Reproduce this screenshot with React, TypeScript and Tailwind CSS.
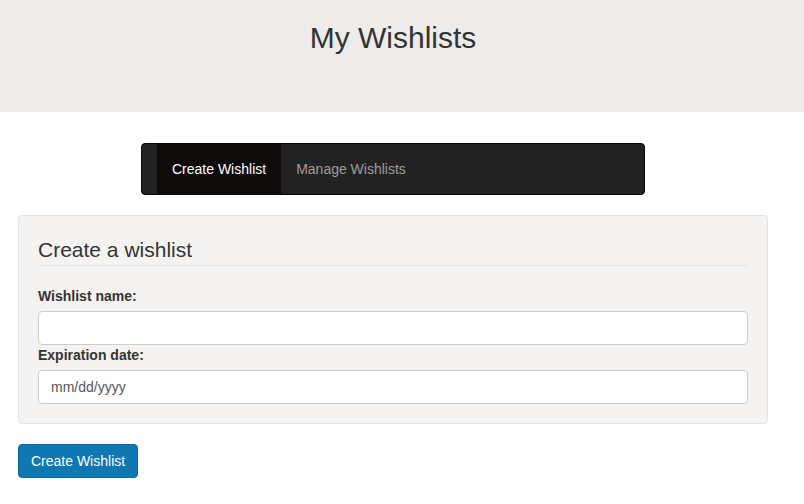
import React from 'react';

const App = () => {
  return (
    <div className="min-h-[504px] bg-white text-[14px] leading-[20px] text-[#333] font-['Liberation_Sans',Arial,sans-serif]">
      <header className="h-[112px] bg-[#eeeceb] mb-[31px]">
        <div className="w-[786px] pt-[20px] text-center">
          <h1 className="text-[30px] leading-[36px] font-normal text-[#333]">My Wishlists</h1>
        </div>
      </header>

      <div className="w-[786px] px-[18px]">
        <nav className="mx-auto w-[504px] h-[52px] flex bg-[#222] border border-[#080808] rounded-[4px] pl-[15px]">
          <a className="flex items-center px-[15px] bg-[#0e0a0a] text-white cursor-pointer">Create Wishlist</a>
          <a className="flex items-center px-[15px] text-[#9d9d9d] cursor-pointer">Manage Wishlists</a>
        </nav>

        <div className="mt-[20px] w-[750px] bg-[#f4f3f1] border border-[#e3e3e3] rounded-[4px] p-[19px]">
          <h2 className="text-[21px] leading-[30px] text-[#333] border-b border-[#e5e5e5] mb-[20px]">Create a wishlist</h2>

          <label className="block font-bold mb-[5px]">Wishlist name:</label>
          <input
            type="text"
            className="block w-full h-[34px] bg-white border border-[#ccc] rounded-[4px] px-[12px] py-[6px] text-[#555] outline-none"
          />

          <label className="block font-bold mb-[5px]">Expiration date:</label>
          <input
            type="text"
            placeholder="mm/dd/yyyy"
            className="block w-full h-[34px] bg-white border border-[#ccc] rounded-[4px] px-[12px] py-[6px] text-[#555] placeholder:text-[#555] outline-none"
          />
        </div>

        <button className="mt-[20px] h-[34px] px-[12px] bg-[#0f77b1] border border-[#0c6aa0] rounded-[4px] text-white">
          Create Wishlist
        </button>
      </div>
    </div>
  );
};

export default App;
